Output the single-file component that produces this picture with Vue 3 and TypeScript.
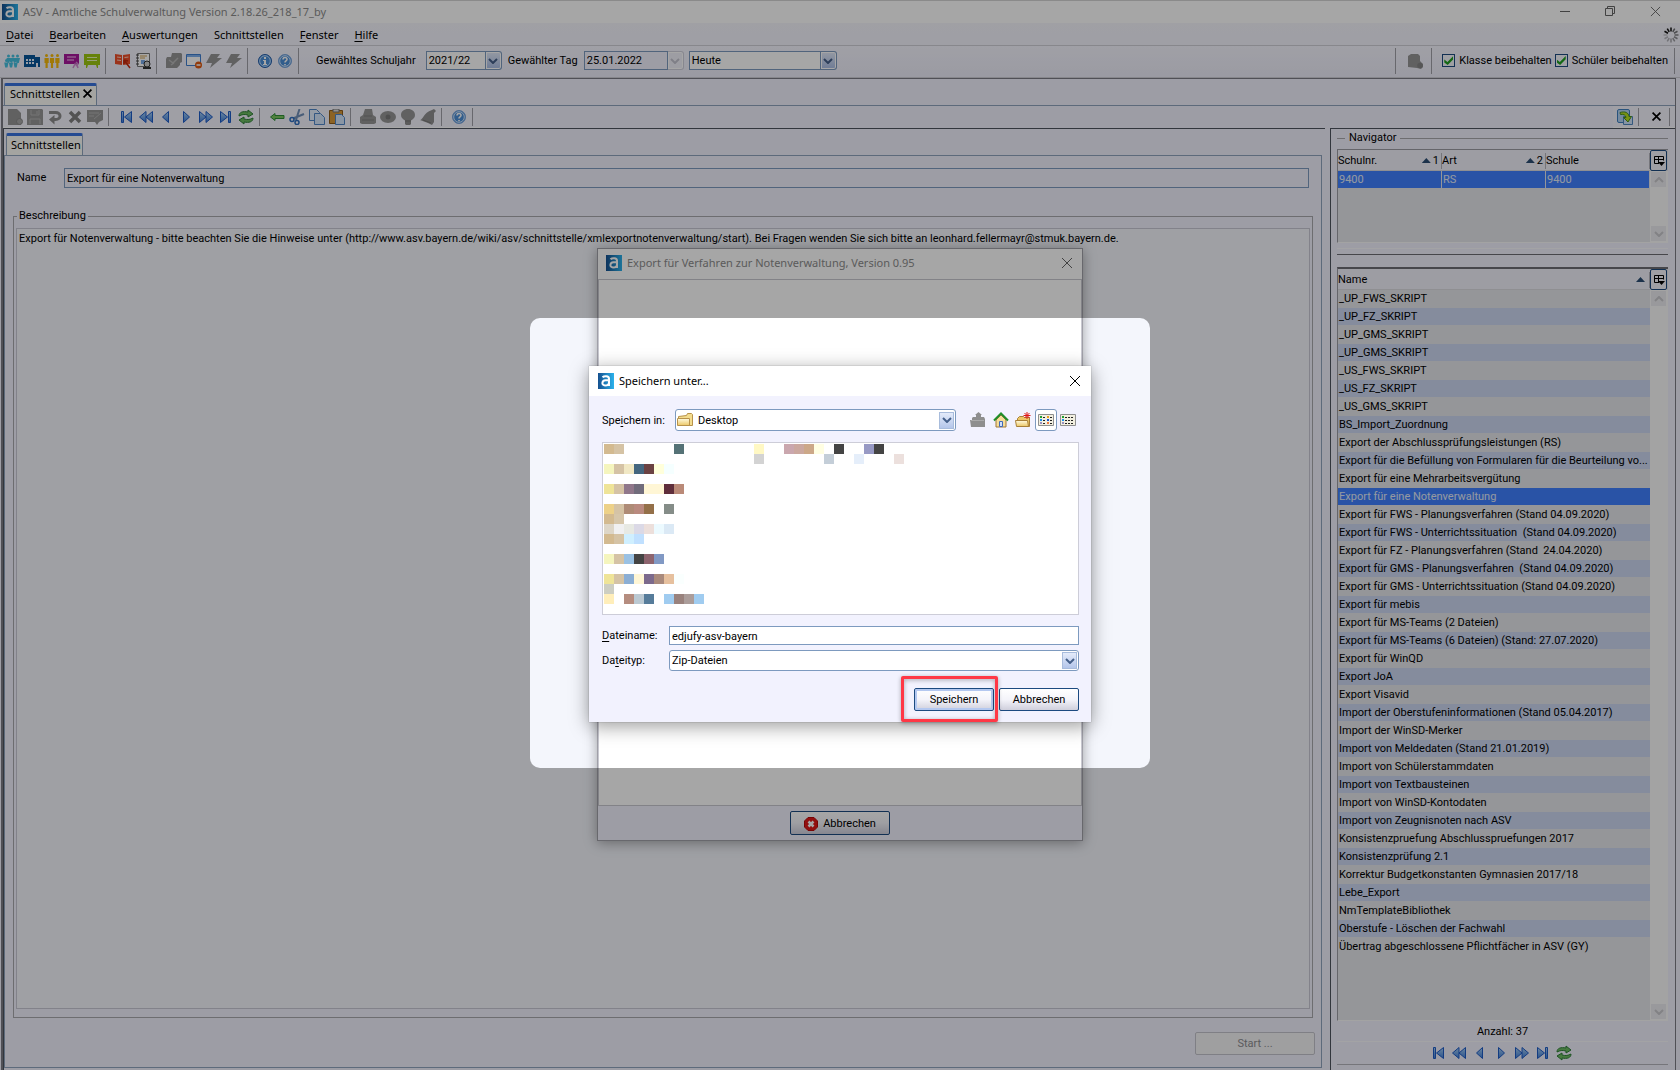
<script setup lang="ts">
import { ref } from 'vue'

interface Tool {
  icon: string
  label: string
}
type ToolGroup = Tool[]

const t = (icon: string, label: string): Tool => ({ icon, label })

const menus = [
  ['D', 'atei'],
  ['B', 'earbeiten'],
  ['A', 'uswertungen'],
  ['', 'Schnittstellen'],
  ['F', 'enster'],
  ['H', 'ilfe'],
]

const mainTools: ToolGroup[] = [
  [t('people', 'Schüler'), t('school', 'Schule'), t('staff', 'Lehrkräfte'), t('board-purple', 'Unterricht'), t('board-green', 'Klassen')],
  [t('book', 'Leistungen'), t('report', 'Berichte')],
  [t('puzzle', 'Module'), t('window-stop', 'Fenster schließen'), t('flash', 'Aktion'), t('flash', 'Aktion 2')],
  [t('info', 'Information'), t('help', 'Hilfe')],
]

const navTools: ToolGroup = [
  t('first', 'Erster'),
  t('rewind', 'Zurückblättern'),
  t('prev', 'Voriger'),
  t('next', 'Nächster'),
  t('forward', 'Vorblättern'),
  t('last', 'Letzter'),
  t('refresh', 'Aktualisieren'),
]

const editTools: ToolGroup[] = [
  [t('new', 'Neu'), t('save', 'Speichern'), t('undo', 'Rückgängig'), t('delete', 'Löschen'), t('edit', 'Bearbeiten')],
  navTools,
  [t('back', 'Zurück'), t('cut', 'Ausschneiden'), t('copy', 'Kopieren'), t('paste', 'Einfügen')],
  [t('print', 'Drucken'), t('eye', 'Vorschau'), t('bulb', 'Hinweis'), t('bell', 'Erinnerung')],
  [t('help', 'Hilfe')],
]

const interfaces = [
  '_UP_FWS_SKRIPT',
  '_UP_FZ_SKRIPT',
  '_UP_GMS_SKRIPT',
  '_UP_GMS_SKRIPT',
  '_US_FWS_SKRIPT',
  '_US_FZ_SKRIPT',
  '_US_GMS_SKRIPT',
  'BS_Import_Zuordnung',
  'Export der Abschlussprüfungsleistungen (RS)',
  'Export für die Befüllung von Formularen für die Beurteilung vo...',
  'Export für eine Mehrarbeitsvergütung',
  'Export für eine Notenverwaltung',
  'Export für FWS - Planungsverfahren (Stand 04.09.2020)',
  'Export für FWS - Unterrichtssituation  (Stand 04.09.2020)',
  'Export für FZ - Planungsverfahren (Stand  24.04.2020)',
  'Export für GMS - Planungsverfahren  (Stand 04.09.2020)',
  'Export für GMS - Unterrichtssituation (Stand 04.09.2020)',
  'Export für mebis',
  'Export für MS-Teams (2 Dateien)',
  'Export für MS-Teams (6 Dateien) (Stand: 27.07.2020)',
  'Export für WinQD',
  'Export JoA',
  'Export Visavid',
  'Import der Oberstufeninformationen (Stand 05.04.2017)',
  'Import der WinSD-Merker',
  'Import von Meldedaten (Stand 21.01.2019)',
  'Import von Schülerstammdaten',
  'Import von Textbausteinen',
  'Import von WinSD-Kontodaten',
  'Import von Zeugnisnoten nach ASV',
  'Konsistenzpruefung Abschlusspruefungen 2017',
  'Konsistenzprüfung 2.1',
  'Korrektur Budgetkonstanten Gymnasien 2017/18',
  'Lebe_Export',
  'NmTemplateBibliothek',
  'Oberstufe - Löschen der Fachwahl',
  'Übertrag abgeschlossene Pflichtfächer in ASV (GY)',
]
const selected = ref(11)

const name = ref('Export für eine Notenverwaltung')
const description = ref(
  'Export für Notenverwaltung - bitte beachten Sie die Hinweise unter (http://www.asv.bayern.de/wiki/asv/schnittstelle/xmlexportnotenverwaltung/start). Bei Fragen wenden Sie sich bitte an leonhard.fellermayr@stmuk.bayern.de.',
)
const day = ref('25.01.2022')
const fileName = ref('edjufy-asv-bayern')
const keepClass = ref(true)
const keepPupil = ref(true)

// Pixelated file list: row, first column, and the colours of the cells from there on.
const mosaicRows: [number, number, string][] = [
  [0, 0, 'd3ba90 d5c3a5'],
  [0, 7, '557276'],
  [0, 15, 'fff8c4'],
  [0, 18, 'caa7ae cba89f cca888 fffee2'],
  [0, 23, '444444'],
  [0, 26, '9799c4 444444'],
  [1, 15, 'd3d3d3'],
  [1, 22, 'c4ced8'],
  [1, 25, 'e5eefa'],
  [1, 29, 'ece0dd'],
  [2, 0, 'f5f5be d5c3a5 f1e8c4 44667f 6b4242 ffffdb f5ffff'],
  [4, 0, 'efe498 d5c3a5 90778a 716c7b fff6d5 fff6d5 5f2e3b ba8a78'],
  [6, 0, 'edd188 d5c3a5 ae8b76 b98a7f 947049'],
  [6, 6, '858d88'],
  [7, 0, 'd3ba90 d6c6aa'],
  [8, 0, 'ddd6c8 f0f0f1 e7e9e3 dbd9e6 ecdfdb ecfaff dbe9f5'],
  [9, 0, 'd3ba90 d5c3a5 cfefff c0e0ff'],
  [11, 0, 'f5f5be d5c3a5 9ac1e3 444444 8d646e 8199c4'],
  [13, 0, 'efe498 d5c3a5 8baed4 fff6d5 7c6a8c a98a7c e6c09e fafffe'],
  [14, 0, 'cdcec2'],
  [15, 0, 'ffeeba'],
  [15, 2, 'b58d7f bbc9d2 567c9a'],
  [15, 6, 'a0ccf0 99827d ab9d9a a0ccf0'],
]
const cells = mosaicRows.flatMap(([row, col, list]) =>
  list.split(' ').map((color, i) => ({ x: (col + i) * 10, y: row * 10, fill: '#' + color })),
)
const spokes = Array.from({ length: 12 }, (_, i) => ({
  angle: i * 30,
  opacity: i > 9 || i === 0 ? 1 : 0.65 - i * 0.05,
}))
</script>

<template>
  <svg class="defs" aria-hidden="true">
    <defs>
      <linearGradient id="g-blue" x1="0" y1="0" x2="0" y2="1">
        <stop offset="0" stop-color="#a8d0f6" /><stop offset="1" stop-color="#3f7fd8" />
      </linearGradient>
      <linearGradient id="g-logo" x1="0" y1="0" x2="1" y2="0">
        <stop offset="0" stop-color="#15508f" /><stop offset="1" stop-color="#2bb2ec" />
      </linearGradient>
      <linearGradient id="g-folder" x1="0" y1="0" x2="0" y2="1">
        <stop offset="0" stop-color="#fffbe0" /><stop offset="1" stop-color="#ecc766" />
      </linearGradient>
      <symbol id="logo" viewBox="0 0 16 16">
        <rect width="16" height="16" fill="url(#g-logo)" />
        <path d="M4.5 4.3C6 2.9 11 2.3 11 5.8V13M11 7.3H7.5C3.5 7.6 3.4 12.4 7 12.4c2.2 0 4-1.2 4-3" fill="none" stroke="#fff" stroke-width="2" />
      </symbol>
      <symbol id="people" viewBox="0 0 16 16">
        <g fill="#46c0e0"><circle cx="4.500" cy="3" r="1.500" /><circle cx="9" cy="3" r="1.500" /><circle cx="13.500" cy="3" r="1.500" />
          <path d="M2.500 5h13.500l-1.200 5h-2L12 8l-1.500 2-1.500-2-1.500 2L6 8l-1.500 2h-1z" />
          <circle cx="2.500" cy="7.500" r="1.500" /><circle cx="7" cy="7.500" r="1.500" /><circle cx="11.500" cy="7.500" r="1.500" />
          <path d="M.2 9.500h4.300l-1 5h-2.300zM4.900 9.500h4.200l-1 5H5.900zM9.500 9.500h4.200l-1 5h-2.200z" /></g>
      </symbol>
      <symbol id="school" viewBox="0 0 16 16">
        <path d="M0 2h11v2h5v10h-2v-4h-2v4H0z" fill="#07559a" />
        <path d="M2 6h2v2H2zM5 6h2v2H5zM8 6h2v2H8zM2 9h2v2H2zM5 9h2v2H5zM8 9h2v2H8z" fill="#e9f2ff" />
      </symbol>
      <symbol id="staff" viewBox="0 0 16 16">
        <g fill="#f7bb0a"><circle cx="2.500" cy="2.500" r="1.500" /><circle cx="8" cy="2.500" r="1.500" /><circle cx="13.500" cy="2.500" r="1.500" />
          <path d="M.5 5h4.200v5h-1v5H1.500v-5h-1zM5.900 5h4.200v5h-1v5H6.900v-5h-1zM11.300 5h4.200v5h-1v5h-2.200v-5h-1z" /></g>
      </symbol>
      <symbol id="board-purple" viewBox="0 0 16 16">
        <path d="M0 1h15v10H0z" fill="#a8189c" /><path d="M3 4h9M3 7h7" stroke="#f0c8ee" />
        <path d="M9 15l2-4 2 1 1 3M12 9l2 2-2 2" fill="none" stroke="#d08ad0" stroke-width="1.500" />
      </symbol>
      <symbol id="board-green" viewBox="0 0 16 16">
        <path d="M0 1h16v11H0zM2 12h2l-1 3H2zM12 12h2v3h-1z" fill="#9dc810" /><path d="M3 4.500h10M3 7.500h10" stroke="#eaf6b8" />
      </symbol>
      <symbol id="book" viewBox="0 0 16 16">
        <path d="M0 1l7 1v10l-7-1zM8 2l7-1v10l-3 .5L8 12z" fill="#ee4f2a" /><path d="M2 4l4 .5M2 7l4 .5M9.500 4.500l4-.5M9.500 7.500h2" stroke="#ffd0c0" />
        <path d="M9 7l6 8M9 7v4M9 7l4 1" stroke="#c02a10" stroke-width="1.500" />
      </symbol>
      <symbol id="report" viewBox="0 0 16 16">
        <path d="M2.500.5h12v13h-12z" fill="#fff" stroke="#777" /><path d="M1 2h3M1 5h3M1 8h3M1 11h3" stroke="#444" />
        <path d="M5 3h7M5 5h5" stroke="#d0a050" /><path d="M6 7h4v4H6z" fill="#7aaae8" />
        <circle cx="12" cy="11" r="3" fill="#ccc" stroke="#333" /><path d="M8 15h8" stroke="#333" stroke-width="2" />
      </symbol>
      <symbol id="puzzle" viewBox="0 0 16 16">
        <path d="M6 0h9l1 1v8l-2 1v2l-3 3H0V6l1-2h4z" fill="#969696" /><path d="M3 7l4 3 5-5M5 12l3-2" fill="none" stroke="#b8b8b8" stroke-width="1.500" />
      </symbol>
      <symbol id="window-stop" viewBox="0 0 16 16">
        <path d="M.5 1.500h14v11H.5z" fill="#fff" stroke="#3f7fd0" /><path d="M1 2h13v2H1z" fill="#7fb0ee" />
        <circle cx="12.500" cy="12" r="3.500" fill="#e05a10" /><path d="M10.500 12h4" stroke="#fff" stroke-width="1.500" />
      </symbol>
      <symbol id="flash" viewBox="0 0 16 16"><path d="M5 1h9l-3 4h5L4 15l2-5H0z" fill="#969696" /></symbol>
      <symbol id="info" viewBox="0 0 16 16">
        <circle cx="8" cy="8" r="6.500" fill="#4c8fd8" stroke="#245ca8" /><circle cx="8" cy="8" r="5.300" fill="none" stroke="#b8dcff" />
        <path d="M7 4h2v2H7zM6 7h3v4h1v1H6v-1h1V8H6z" fill="#fff" />
      </symbol>
      <symbol id="help" viewBox="0 0 16 16">
        <circle cx="8" cy="8" r="6.500" fill="#4c8fd8" stroke="#7aa6dc" /><circle cx="8" cy="8" r="5.300" fill="none" stroke="#d4e8ff" />
        <path d="M6 6.500c0-3 4.300-2.500 4 0C9.800 8 8 7.800 8 9.500M8 11v1.200" fill="none" stroke="#fff" stroke-width="1.600" />
      </symbol>
      <symbol id="new" viewBox="0 0 16 16">
        <path d="M1 0h9l4 4v12H1z" fill="#969696" /><circle cx="12.500" cy="12.500" r="3" fill="#a8a8a8" stroke="#888" />
      </symbol>
      <symbol id="save" viewBox="0 0 16 16">
        <path d="M0 0h15l1 1v15H0z" fill="#969696" /><path d="M4 1v5h8V1M3 15v-5h10v5M10 2v3" fill="none" stroke="#b4b4b4" />
      </symbol>
      <symbol id="undo" viewBox="0 0 16 16">
        <path d="M2 3.500h6.500c6 0 6 7 0 7H6" fill="none" stroke="#8c8c8c" stroke-width="3" /><path d="M7.500 6v9.500L2 10.500z" fill="#8c8c8c" />
      </symbol>
      <symbol id="delete" viewBox="0 0 16 16"><path d="M3 3l10 10M13 3L3 13" stroke="#808080" stroke-width="3.500" /></symbol>
      <symbol id="edit" viewBox="0 0 16 16">
        <path d="M0 1h16v10l-4 2-2 3-2-3H0z" fill="#969696" /><path d="M2 4h10M2 7h5M7 10l7-6" stroke="#b4b4b4" />
      </symbol>
      <symbol id="first" viewBox="0 0 16 16">
        <path d="M3.500 2.500h2v11h-2zM13.500 2.500v11l-7-5.500z" fill="url(#g-blue)" stroke="#1e5cc8" />
      </symbol>
      <symbol id="rewind" viewBox="0 0 16 16">
        <path d="M8 2.500v11L1.500 8zM14.500 2.500v11L8 8z" fill="url(#g-blue)" stroke="#1e5cc8" />
      </symbol>
      <symbol id="prev" viewBox="0 0 16 16"><path d="M10.500 2.500v11L4.500 8z" fill="url(#g-blue)" stroke="#1e5cc8" /></symbol>
      <symbol id="next" viewBox="0 0 16 16"><path d="M5.500 2.500v11l6-5.500z" fill="url(#g-blue)" stroke="#1e5cc8" /></symbol>
      <symbol id="forward" viewBox="0 0 16 16">
        <path d="M1.500 2.500v11L8 8zM8 2.500v11L14.500 8z" fill="url(#g-blue)" stroke="#1e5cc8" />
      </symbol>
      <symbol id="last" viewBox="0 0 16 16">
        <path d="M10.500 2.500h2v11h-2zM2.500 2.500v11l7-5.500z" fill="url(#g-blue)" stroke="#1e5cc8" />
      </symbol>
      <symbol id="refresh" viewBox="0 0 16 16">
        <path d="M1 7C1 3 5 2 10 3V1l5 4-5 3V6C6 5 4 5.500 1 7z" fill="#6cbc62" stroke="#2f7f38" />
        <path d="M15 9c0 4-4 5-9 4v2l-5-4 5-3v2c4 1 6 .5 9-1z" fill="#6cbc62" stroke="#2f7f38" />
      </symbol>
      <symbol id="back" viewBox="0 0 16 16"><path d="M1.500 8L6 4.500v2h9v3H6v2z" fill="#7cc860" stroke="#2f8f38" /></symbol>
      <symbol id="cut" viewBox="0 0 16 16">
        <path d="M10.500 0L7 11M15 5L4 9.500" stroke="#7090b8" stroke-width="2" /><circle cx="3" cy="10.500" r="2" fill="none" stroke="#2f6fc0" stroke-width="1.500" />
        <circle cx="8" cy="13.500" r="2" fill="none" stroke="#2f6fc0" stroke-width="1.500" />
      </symbol>
      <symbol id="copy" viewBox="0 0 16 16">
        <path d="M.5.5h7l3 3v8H.5z" fill="#e4f0ff" stroke="#4f86c8" /><path d="M5.500 4.500h6l4 4v7h-10z" fill="#d4e6fc" stroke="#4f86c8" />
      </symbol>
      <symbol id="paste" viewBox="0 0 16 16">
        <path d="M.5 1.500h13v13H.5z" fill="#d89838" stroke="#8f5c18" /><path d="M4 0h6v3H4z" fill="#ddd" stroke="#777" />
        <path d="M6.500 5.500h6l3 3v7h-9z" fill="#d4e6fc" stroke="#4f86c8" />
      </symbol>
      <symbol id="print" viewBox="0 0 16 16">
        <path d="M5 0h7l1 6 3 2v6l-2 1H2l-2-1V8l3-2z" fill="#969696" /><path d="M4 7h8M2 11h12" stroke="#7c7c7c" />
      </symbol>
      <symbol id="eye" viewBox="0 0 16 16"><ellipse cx="8" cy="8" rx="8" ry="6" fill="#969696" /><circle cx="8" cy="8" r="2.500" fill="#787878" /></symbol>
      <symbol id="bulb" viewBox="0 0 16 16">
        <path d="M8 0c4 0 7 2.500 7 6 0 3-2 4-4 5.500H5C3 10 1 9 1 6c0-3.500 3-6 7-6z" fill="#969696" /><path d="M5 11h6v4l-1 1H6l-1-1z" fill="#8c8c8c" /><path d="M5 12h6" stroke="#777" />
      </symbol>
      <symbol id="bell" viewBox="0 0 16 16">
        <path d="M12 1l2-1 2 2-2 2v9l-2 3-4-2-8-3c3 0 3-7 12-10z" fill="#8f8f8f" /><path d="M3 11l8 3" stroke="#777" />
      </symbol>
      <symbol id="db" viewBox="0 0 16 16">
        <path d="M1 3l3-2h7l2 2v5l3 3v3l-2 2-4-1-9-1z" fill="#969696" /><circle cx="13" cy="12.500" r="2.800" fill="#858585" />
      </symbol>
      <symbol id="detach" viewBox="0 0 16 16">
        <rect x=".5" y=".5" width="12" height="13" rx="1.500" fill="#b4d4f4" stroke="#4080c0" /><path d="M6.500 7.500h9v8h-9z" fill="#cfe4fa" stroke="#5088c0" />
        <path d="M3 3.500c5-1.500 8.500 0 9 4h2.500L11 13 6.500 8.500H9C8.500 6 7 5 3.500 5.500z" fill="#b8e020" stroke="#4a9020" />
      </symbol>
      <symbol id="chevron" viewBox="0 0 10 6"><path d="M1 1l4 4 4-4" fill="none" stroke="currentColor" stroke-width="2" /></symbol>
      <symbol id="cross" viewBox="0 0 12 12"><path d="M1 1l10 10M11 1L1 11" stroke="currentColor" /></symbol>
      <symbol id="boldcross" viewBox="0 0 8 8"><path d="M.5.5l7 7M7.500.5l-7 7" stroke="#000" stroke-width="1.500" /></symbol>
      <symbol id="columns" viewBox="0 0 12 12">
        <path d="M1.500 8.500v-7h9v4M1.500 4.500h9M5.500 1.500v7M1.500 8.500H6" fill="none" stroke="#000" /><path d="M5 7h7l-3.500 4z" fill="#000" />
      </symbol>
      <symbol id="folder" viewBox="0 0 16 16">
        <path d="M1.500 4.500l8-1 1-2h4l1 1v11h-14z" fill="#f3dc8e" stroke="#b8924a" /><path d="M.5 6.500h12v7H.5z" fill="url(#g-folder)" stroke="#b8924a" />
      </symbol>
      <symbol id="up" viewBox="0 0 16 16">
        <path d="M2 6l1-1h3V3H5l3.500-3L12 3h-1v2h3l1 2v8H1L0 8h2z" fill="#8e8e8e" /><path d="M1 8.500h13" stroke="#aaa" />
      </symbol>
      <symbol id="home" viewBox="0 0 16 16">
        <path d="M3 8l5-5 5 5v7H3z" fill="#f4dc98" stroke="#a07838" /><path d="M1 8.500L8 1.500l7 7" fill="none" stroke="#1f8f2a" stroke-width="2" />
        <path d="M6.500 9.500h3v5h-3z" fill="#cfe0fa" stroke="#4068b8" />
      </symbol>
      <symbol id="newfolder" viewBox="0 0 16 16">
        <path d="M2.500 6.500l2-2h4l1 1h5v9h-12z" fill="#ecc766" stroke="#a88038" /><path d="M.5 8.500h12l1 6h-12z" fill="url(#g-folder)" stroke="#a88038" />
        <path d="M12 0v7M8.500 3.500h7M9.500 1l5 5M14.500 1l-5 5" stroke="#e01818" />
      </symbol>
      <symbol id="list" viewBox="0 0 16 12">
        <path d="M.5.5h15v11H.5z" fill="#f2efe0" stroke="#8f8f8f" /><path d="M2 2h2v2H2z" fill="#20a030" /><path d="M2 5h2v2H2z" fill="#1890f0" /><path d="M2 8h2v2H2z" fill="#9a90c0" />
        <path d="M9 2h2v2H9z" fill="#e8a020" /><path d="M9 5h2v2H9z" fill="#1850d0" /><path d="M9 8h2v2H9z" fill="#f07840" />
        <path d="M5 3.500h2M5 6.500h2M5 9.500h2M12 3.500h2M12 6.500h2M12 9.500h2" stroke="#222" />
      </symbol>
      <symbol id="details" viewBox="0 0 16 12">
        <path d="M.5.5h15v11H.5z" fill="#f2efe0" stroke="#8f8f8f" /><path d="M2 2h2v2H2z" fill="#20a030" /><path d="M2 5h2v2H2z" fill="#1890f0" /><path d="M2 8h2v2H2z" fill="#9a90c0" />
        <path d="M5 3.500h9M5 6.500h9M5 9.500h9" stroke="#222" stroke-dasharray="2 1" />
      </symbol>
      <symbol id="abort" viewBox="0 0 14 14">
        <path d="M4 .5h6L13.500 4v6L10 13.500H4L.5 10V4z" fill="#e01818" stroke="#b80808" /><path d="M4.500 4.500l5 5M9.500 4.500l-5 5" stroke="#fff" stroke-width="2.500" />
      </symbol>
    </defs>
  </svg>

  <div class="app">
    <header class="titlebar">
      <svg class="i16"><use href="#logo" /></svg>
      <h1>ASV - Amtliche Schulverwaltung Version 2.18.26_218_17_by</h1>
      <div class="winbuttons">
        <button type="button" aria-label="Minimieren"><svg width="10" height="11"><path d="M0 5.500h10" stroke="#666" /></svg></button>
        <button type="button" aria-label="Wiederherstellen">
          <svg width="10" height="11" fill="none" stroke="#666"><path d="M.5 2.500h7v7h-7zM2.500 2.500v-2h7v7h-2" /></svg>
        </button>
        <button type="button" aria-label="Schließen"><svg width="11" height="11" class="grey"><use href="#cross" /></svg></button>
      </div>
    </header>

    <nav class="menubar">
      <a v-for="m in menus" :key="m[1]" href="#"><u>{{ m[0] }}</u>{{ m[1] }}</a>
      <svg class="spinner" viewBox="-8 -8 16 16">
        <path v-for="s in spokes" :key="s.angle" d="M0-3.500v-4" stroke="#111" stroke-width="1.500" :opacity="s.opacity" :transform="`rotate(${s.angle})`" />
      </svg>
    </nav>

    <div class="toolbar main-tools">
      <template v-for="(g, gi) in mainTools" :key="gi">
        <button v-for="b in g" :key="b.label" type="button" class="tool" :aria-label="b.label"><svg class="i16"><use :href="'#' + b.icon" /></svg></button>
        <i class="sep"></i>
      </template>
      <div class="filters">
        <label for="year">Gewähltes Schuljahr</label>
        <span class="combo year">
          <select id="year"><option>2021/22</option></select>
          <b class="drop"><svg width="10" height="6"><use href="#chevron" /></svg></b>
        </span>
        <label for="day" class="day-label">Gewählter Tag</label>
        <span class="combo day">
          <input id="day" v-model="day" type="text" />
          <b class="drop off"><svg width="10" height="6"><use href="#chevron" /></svg></b>
        </span>
        <span class="combo today">
          <select aria-label="Tag"><option>Heute</option></select>
          <b class="drop"><svg width="10" height="6"><use href="#chevron" /></svg></b>
        </span>
      </div>
      <i class="sep"></i>
      <button type="button" class="tool db" aria-label="Datenbank"><svg class="i16"><use href="#db" /></svg></button>
      <i class="sep"></i>
      <label class="check"><input v-model="keepClass" type="checkbox" />Klasse beibehalten</label>
      <label class="check"><input v-model="keepPupil" type="checkbox" />Schüler beibehalten</label>
      <i class="sep end"></i>
    </div>

    <main class="frame">
      <div class="tabs outer-tabs">
        <button type="button" class="tab">Schnittstellen<svg width="9" height="9"><use href="#boldcross" /></svg></button>
      </div>
      <div class="toolbar edit-tools">
        <div class="strip">
          <template v-for="(g, gi) in editTools" :key="gi">
            <button v-for="b in g" :key="b.label" type="button" class="tool" :aria-label="b.label"><svg class="i16"><use :href="'#' + b.icon" /></svg></button>
            <i class="sep"></i>
          </template>
        </div>
        <div class="strip right">
          <button type="button" class="tool" aria-label="Lösen"><svg class="i16"><use href="#detach" /></svg></button>
          <i class="sep"></i>
          <button type="button" class="tool" aria-label="Schließen"><svg width="9" height="9"><use href="#boldcross" /></svg></button>
          <i class="sep end"></i>
        </div>
      </div>

      <div class="split">
        <section class="editor">
          <div class="tabs inner-tabs"><button type="button" class="tab">Schnittstellen</button></div>
          <div class="sheet">
            <div class="name-row">
              <label for="name">Name</label>
              <input id="name" v-model="name" type="text" />
            </div>
            <fieldset>
              <legend>Beschreibung</legend>
              <textarea v-model="description" aria-label="Beschreibung"></textarea>
            </fieldset>
            <div class="start-row"><button type="button" disabled>Start ...</button></div>
          </div>
        </section>

        <aside class="navigator">
          <h2>Navigator</h2>
          <div class="grid short">
            <div class="view">
              <table>
                <thead>
                  <tr>
                    <th><div>Schulnr.<span><i class="tri"></i>1</span></div></th>
                    <th><div>Art<span><i class="tri"></i>2</span></div></th>
                    <th><div>Schule</div></th>
                  </tr>
                </thead>
                <tbody>
                  <tr class="sel"><td>9400</td><td>RS</td><td>9400</td></tr>
                </tbody>
              </table>
            </div>
            <div class="side">
              <button type="button" class="cols" aria-label="Spalten"><svg width="12" height="12"><use href="#columns" /></svg></button>
              <div class="scroll">
                <b><svg class="flip" width="10" height="6"><use href="#chevron" /></svg></b>
                <b><svg width="10" height="6"><use href="#chevron" /></svg></b>
              </div>
            </div>
          </div>
          <hr />
          <div class="grid long">
            <div class="view">
              <table>
                <thead>
                  <tr><th><div>Name<span><i class="tri"></i></span></div></th></tr>
                </thead>
                <tbody>
                  <tr v-for="(n, i) in interfaces" :key="i" :class="{ sel: i === selected }" @click="selected = i"><td>{{ n }}</td></tr>
                </tbody>
              </table>
            </div>
            <div class="side">
              <button type="button" class="cols" aria-label="Spalten"><svg width="12" height="12"><use href="#columns" /></svg></button>
              <div class="scroll">
                <b><svg class="flip" width="10" height="6"><use href="#chevron" /></svg></b>
                <b><svg width="10" height="6"><use href="#chevron" /></svg></b>
              </div>
            </div>
          </div>
          <p class="count">Anzahl: {{ interfaces.length }}</p>
          <div class="pager">
            <button v-for="b in navTools" :key="b.label" type="button" class="tool" :aria-label="b.label"><svg class="i16"><use :href="'#' + b.icon" /></svg></button>
          </div>
        </aside>
      </div>
    </main>

    <div class="layer">
      <section class="export" role="dialog" aria-label="Export">
        <header>
          <svg class="i16"><use href="#logo" /></svg>
          <h2>Export für Verfahren zur Notenverwaltung, Version 0.95</h2>
          <button type="button" aria-label="Schließen"><svg width="12" height="12"><use href="#cross" /></svg></button>
        </header>
        <div class="canvas"></div>
        <footer>
          <button type="button" class="push"><svg width="14" height="14"><use href="#abort" /></svg>Abbrechen</button>
        </footer>
      </section>
    </div>

    <div class="layer"><div class="spotlight"></div></div>

    <div class="layer">
      <form class="chooser" role="dialog" aria-label="Speichern unter" @submit.prevent>
        <header>
          <svg class="i16"><use href="#logo" /></svg>
          <h2>Speichern unter...</h2>
          <button type="button" aria-label="Schließen"><svg width="12" height="12"><use href="#cross" /></svg></button>
        </header>
        <div class="body">
          <div class="where">
            <label for="folder-select">Spe<u>i</u>chern in:</label>
            <span class="picker folder">
              <svg class="i16"><use href="#folder" /></svg>
              <select id="folder-select"><option>Desktop</option></select>
              <b><svg width="10" height="6"><use href="#chevron" /></svg></b>
            </span>
            <div class="views">
              <button type="button" aria-label="Eine Ebene höher"><svg class="i16"><use href="#up" /></svg></button>
              <button type="button" aria-label="Home"><svg class="i16"><use href="#home" /></svg></button>
              <button type="button" aria-label="Neuer Ordner"><svg class="i16"><use href="#newfolder" /></svg></button>
              <button type="button" class="on" aria-label="Liste"><svg width="16" height="12"><use href="#list" /></svg></button>
              <button type="button" aria-label="Details"><svg width="16" height="12"><use href="#details" /></svg></button>
            </div>
          </div>
          <div class="files">
            <svg width="300" height="160" shape-rendering="crispEdges">
              <rect v-for="(c, i) in cells" :key="i" :x="c.x" :y="c.y" width="10" height="10" :fill="c.fill" />
            </svg>
          </div>
          <div class="field">
            <label for="file"><u>D</u>ateiname:</label>
            <input id="file" v-model="fileName" type="text" />
          </div>
          <div class="field">
            <label for="type">Da<u>t</u>eityp:</label>
            <span class="picker">
              <select id="type"><option>Zip-Dateien</option></select>
              <b><svg width="10" height="6"><use href="#chevron" /></svg></b>
            </span>
          </div>
          <div class="actions">
            <span class="marked"><button type="submit" class="push primary">Speichern</button></span>
            <button type="button" class="push">Abbrechen</button>
          </div>
        </div>
      </form>
    </div>
  </div>
</template>

<style>
body {
  margin: 0;
}
</style>

<style scoped>
.defs {
  position: absolute;
  width: 0;
  height: 0;
}
.app {
  position: relative;
  display: flex;
  flex-direction: column;
  min-height: 100vh;
  overflow: hidden;
  background: #f2f2fe;
  color: #000;
  font: 11px/16px Roboto, 'Liberation Sans', sans-serif;
}
.app *,
.app *::before {
  box-sizing: border-box;
}
button,
input,
select,
textarea {
  margin: 0;
  padding: 0;
  border: 0;
  border-radius: 0;
  background: none;
  color: inherit;
  font: inherit;
  outline: 0;
}
select {
  appearance: none;
}
h1,
h2 {
  margin: 0;
  font: 11px/16px 'Noto Sans', sans-serif;
}
svg {
  flex: none;
}
.i16 {
  width: 16px;
  height: 16px;
}

/* title and menu */
.titlebar {
  display: flex;
  align-items: center;
  height: 23px;
  padding: 0 20px 1px 2px;
  border-top: 1px solid #d4d4d4;
  background: #fff;
}
.titlebar h1 {
  flex: 1;
  margin-left: 5px;
  color: #8c8c8c;
}
.winbuttons {
  display: flex;
  gap: 35px;
}
.winbuttons button {
  display: flex;
  align-items: center;
  width: 10px;
}
.grey {
  color: #666;
}
.menubar {
  display: flex;
  align-items: center;
  gap: 16px;
  height: 23px;
  padding: 1px 1px 0 6px;
  border-bottom: 1px solid #d0d0d8;
  background: linear-gradient(#f6f6fc, #f4f4fe);
  font: 11px/16px 'Noto Sans', sans-serif;
}
.menubar a {
  color: inherit;
  text-decoration: none;
}
u {
  text-underline-offset: 2px;
}
.spinner {
  width: 16px;
  height: 16px;
  margin-left: auto;
}

/* tool bars */
.toolbar {
  display: flex;
  align-items: center;
}
.main-tools {
  height: 32px;
  padding: 0 0 2px 2px;
  border-bottom: 1px solid #d0d0d8;
  background: linear-gradient(#f6f6ff, #eeeefa);
}
.tool {
  display: flex;
  align-items: center;
  justify-content: center;
  width: 20px;
  height: 20px;
}
.sep {
  width: 1px;
  align-self: stretch;
  margin: 2px 7px 1px 3px;
  background: #a0a0a8;
}
.sep.end {
  margin-right: 5px;
}
.main-tools .end {
  margin-left: 6px;
}
.filters {
  display: flex;
  flex: 1;
  align-items: center;
  margin-left: 10px;
}
.combo {
  display: flex;
  height: 19px;
}
.combo select,
.combo input {
  flex: 1;
  min-width: 0;
  padding: 0 2px;
  border: 1px solid #7d9abf;
  background: #fff;
}
.combo.year {
  width: 76px;
  margin: 0 6px 0 10px;
}
.combo.day {
  width: 100px;
  margin: 0 5px 0 6px;
}
.combo.day input {
  background: #f2f2fe;
}
.combo.today {
  width: 148px;
}
.drop {
  display: flex;
  align-items: center;
  justify-content: center;
  width: 16px;
  border: 1px solid #7d9abf;
  border-left: 0;
  border-radius: 0 3px 3px 0;
  background: linear-gradient(#e4ebfa, #a9bee6);
  box-shadow: inset 0 0 0 1px #fff;
  color: #45608a;
}
.drop.off {
  border-color: #d0d0dc;
  background: #f2f2fa;
  color: #c4c4d0;
}
.db {
  margin-right: 3px;
  margin-left: 2px;
}
.check {
  display: flex;
  align-items: center;
  gap: 4px;
  margin-left: 3px;
}
.check input {
  appearance: none;
  display: grid;
  place-items: center;
  width: 13px;
  height: 13px;
  border: 1px solid #1c4a80;
  background: #f4f6fc;
}
.check input:checked::before {
  content: '';
  width: 9px;
  height: 9px;
  background: #1fa01f;
  clip-path: polygon(0 40%, 35% 68%, 100% 0, 100% 35%, 38% 100%, 0 72%);
}

/* document frame */
.frame {
  display: flex;
  flex: 1;
  flex-direction: column;
  margin: 0 4px 0 1px;
  border: solid #7c7c84;
  border-width: 1px 1px 0 2px;
}
.tabs {
  display: flex;
  border-bottom: 1px solid #8fa3bd;
}
.outer-tabs {
  padding: 4px 1px 0;
}
.inner-tabs {
  padding: 4px 2px 0;
}
.tab {
  display: flex;
  align-items: center;
  gap: 3px;
  height: 22px;
  padding: 0 4px 4px;
  border: solid #8fa3bd;
  border-width: 3px 1px 0;
  border-top-color: #3a74e0;
  border-radius: 2px 2px 0 0;
  background: #fcfcf8;
  font: 11px/16px 'Noto Sans', sans-serif;
}
.outer-tabs .tab {
  padding-left: 5px;
}
.inner-tabs .tab {
  padding: 0 1px 2px 4px;
}
.edit-tools {
  height: 22px;
  justify-content: space-between;
}
.strip {
  display: flex;
  align-items: center;
  height: 22px;
  padding-left: 2px;
  border-bottom: 1px solid #fff;
  background: #f4f4fe;
}
.split {
  display: flex;
  flex: 1;
}
.editor {
  display: flex;
  flex: 1;
  flex-direction: column;
  min-width: 0;
  margin-right: 5px;
  padding-right: 3px;
  border: solid #4e545e;
  border-width: 1px 0 0 1px;
}
.sheet {
  display: flex;
  flex: 1;
  flex-direction: column;
  margin-bottom: 2px;
  padding: 12px 6px 12px 8px;
  border: 1px solid #8fa3bd;
  border-top: 0;
}
.name-row {
  display: flex;
  align-items: center;
  padding-right: 6px;
}
.name-row label {
  width: 51px;
  padding-left: 4px;
}
.name-row input {
  flex: 1;
  height: 20px;
  padding: 0 2px;
  border: 1px solid #7d9abf;
}
fieldset {
  display: flex;
  flex: 1;
  flex-direction: column;
  min-width: 0;
  margin: 20px 2px 0 0;
  padding: 4px 2px 8px;
  border: 1px solid #a8a8ac;
}
legend {
  margin-left: 1px;
  padding: 0 2px;
}
textarea {
  flex: 1;
  padding: 2px;
  border: 1px solid #c8c8d4;
  background: #f4f6fc;
  resize: none;
}
.start-row {
  display: flex;
  justify-content: flex-end;
  margin-top: 14px;
}
.start-row button {
  width: 120px;
  height: 23px;
  border: 1px solid #c4c4cc;
  border-radius: 2px;
  background: #f4f4f6;
  color: #8c8c90;
}

/* navigator */
.navigator {
  display: flex;
  flex-direction: column;
  width: 345px;
  padding: 1px 7px 5px 6px;
  border: solid #4e545e;
  border-width: 1px 0 0 1px;
}
.navigator h2 {
  display: flex;
  align-items: center;
  gap: 4px;
  margin-bottom: 3px;
  font: inherit;
}
.navigator h2::before,
.navigator h2::after {
  content: '';
  width: 8px;
  height: 1px;
  background: #a8a8ac;
}
.navigator h2::after {
  flex: 1;
}
.grid {
  display: flex;
  border: solid #9c9ca4;
  border-width: 1px 0 0 1px;
  background: #e5e7ec;
  border-bottom: 1px solid #fafafa;
}
.short {
  height: 94px;
}
.long {
  flex: 1;
  border-top: 2px solid #6c6c74;
}
.view {
  flex: 1;
  min-width: 0;
}
table {
  width: 100%;
  border-collapse: separate;
  border-spacing: 0;
  table-layout: fixed;
}
th {
  height: 21px;
  padding: 0;
  border-bottom: 1px solid #dcdce0;
  background: #f2f2fa;
  font-weight: normal;
  text-align: left;
}
th div {
  display: flex;
  justify-content: space-between;
  margin-top: 1px;
  padding: 0 2px 0 0;
  border-right: 1px solid #b4b4bc;
}
th span {
  display: flex;
  align-items: center;
  gap: 2px;
}
.tri {
  width: 9px;
  height: 5px;
  background: #2b4e74;
  clip-path: polygon(50% 0, 100% 100%, 0 100%);
}
.long .tri {
  margin-right: 2px;
}
td {
  height: 18px;
  padding: 0 1px;
  border-bottom: 1px solid #e5e7ec;
  line-height: 17px;
  overflow: hidden;
  white-space: pre;
}
.long tbody tr:nth-child(even) td {
  background: #ccd8f2;
}
tbody tr.sel td,
.long tbody tr.sel:nth-child(even) td {
  background: #4080ff;
  color: #e4ecf8;
}
.short td {
  border-right: 1px solid #e5e7ec;
}
.side {
  display: flex;
  flex-direction: column;
  width: 18px;
}
.cols {
  display: flex;
  align-items: center;
  justify-content: center;
  width: 17px;
  height: 21px;
  border: 1px solid #1c4a80;
  border-radius: 2px;
  background: #f4f4fc;
}
.scroll {
  display: flex;
  flex: 1;
  flex-direction: column;
  justify-content: space-between;
  padding: 1px 2px 1px 1px;
  background: #fbfbfb;
}
.scroll b {
  display: grid;
  place-items: center;
  height: 15px;
  background: #ececf0;
  color: #c8c8cc;
}
.flip {
  transform: rotate(180deg);
}
hr {
  align-self: stretch;
  height: 7px;
  margin: 5px 0 12px;
  border: solid #6c6c74;
  border-width: 0 0 1px;
  background: linear-gradient(#fafafe 1px, transparent 1px);
}
.count {
  margin: 3px 0 1px;
  text-align: center;
}
.pager {
  display: flex;
  align-items: center;
  justify-content: center;
  gap: 1px;
  height: 24px;
  padding-right: 3px;
  border-top: 1px solid #fafafe;
  border-bottom: 1px solid #b4b4bc;
}

/* windows above the frame: each layer centres its window below the title row */
.layer {
  position: absolute;
  inset: 18px 0 0;
  display: grid;
  place-items: center;
  pointer-events: none;
}
.layer > * {
  pointer-events: auto;
}
.spotlight {
  width: 620px;
  height: 450px;
  margin-bottom: 2px;
  border-radius: 10px;
  box-shadow: 0 0 0 9999px rgba(0, 0, 0, 0.35);
  pointer-events: none;
}
.export,
.chooser {
  display: flex;
  flex-direction: column;
}
.export {
  width: 486px;
  height: 593px;
  margin-top: 1px;
  border: 1px solid #a0a0a8;
  background: #f2f2fe;
  box-shadow: 0 2px 12px rgba(0, 0, 0, 0.35);
}
.export header,
.chooser header {
  display: flex;
  align-items: center;
  height: 30px;
  padding: 0 10px 1px 9px;
  background: #fff;
}
.export header {
  padding: 0 9px 2px 8px;
}
.export h2,
.chooser h2 {
  flex: 1;
  margin-left: 5px;
}
.export h2 {
  color: #8c8c8c;
}
.export header button {
  color: #666;
}
.export header button,
.chooser header button {
  display: flex;
}
.canvas {
  flex: 1;
  border: 1px solid #c8c8d0;
  background: #fff;
}
.export footer {
  display: flex;
  align-items: center;
  justify-content: center;
  height: 34px;
}
.push {
  display: flex;
  align-items: center;
  justify-content: center;
  gap: 5px;
  width: 80px;
  height: 23px;
  padding-top: 1px;
  border: 1px solid #1c4a80;
  border-radius: 2px;
  background: linear-gradient(#fff, #f4f4fa 50%, #cfcfdc);
}
.export .push {
  width: 100px;
  height: 24px;
}
.push.primary {
  box-shadow: inset 0 0 0 2px #b4c8f0;
}
.chooser {
  width: 502px;
  background: #f2f2fe;
  box-shadow: 0 4px 18px rgba(0, 0, 0, 0.4), 0 0 1px rgba(0, 0, 0, 0.4);
}
.body {
  display: flex;
  flex-direction: column;
  padding: 13px 12px 11px 13px;
}
.where {
  display: flex;
  align-items: center;
}
.where > label {
  width: 73px;
  padding-top: 1px;
}
.picker {
  display: flex;
  flex: 1;
  align-items: center;
  height: 21px;
  padding: 1px;
  border: 1px solid #7d9abf;
  border-radius: 3px;
  background: #fff;
}
.picker select {
  flex: 1;
  padding: 1px 0 0 1px;
}
.picker b {
  display: grid;
  place-items: center;
  width: 15px;
  height: 17px;
  border: 1px solid #a8bcdc;
  background: linear-gradient(#e4ebfa, #b4c6ea);
  color: #45608a;
}
.folder {
  flex: none;
  width: 281px;
  height: 22px;
}
.folder select {
  margin-left: 4px;
}
.views {
  display: flex;
  flex: 1;
  justify-content: space-between;
  margin-left: 11px;
}
.views button {
  display: grid;
  place-items: center;
  width: 22px;
  height: 22px;
}
.views .on {
  border: 1px solid #7d9abf;
  border-radius: 3px;
  background: #fff;
}
.files {
  height: 173px;
  margin: 11px 0;
  padding: 1px;
  border: 1px solid #cdcdd8;
  background: #fff;
}
.field {
  display: flex;
  align-items: center;
  margin-bottom: 5px;
}
.field label {
  width: 67px;
  padding-top: 1px;
}
.field input {
  flex: 1;
  height: 19px;
  padding: 1px 2px 0;
  border: 1px solid #7d9abf;
  background: #fff;
}
.actions {
  display: flex;
  justify-content: flex-end;
  gap: 5px;
  margin-top: 12px;
}
.marked {
  position: relative;
}
.marked::after {
  content: '';
  position: absolute;
  inset: -12px -4px -11px -13px;
  border: 3px solid #ff3846;
  border-radius: 2px;
  filter: drop-shadow(0 1px 2px rgba(0, 0, 0, 0.35));
  pointer-events: none;
}
</style>
